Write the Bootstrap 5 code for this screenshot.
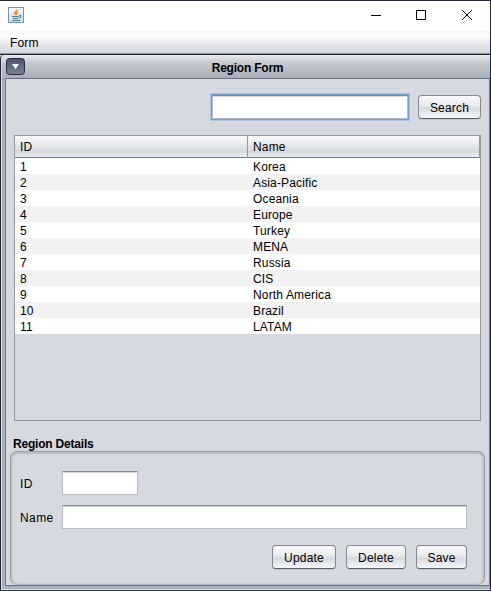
<!DOCTYPE html>
<html lang="en">
<head>
<meta charset="utf-8">
<title>Region Form</title>
<link href="https://cdn.jsdelivr.net/npm/bootstrap@5.3.0/dist/css/bootstrap.min.css" rel="stylesheet">
<style>
body{width:491px;height:591px;overflow:hidden;background:#1c2b3c;font:12px/16px "Liberation Sans",Arial,sans-serif;letter-spacing:.15px;color:#000}
.app-window{width:490px;height:591px;border-top:1px solid #25293a;background:#d6d9df}
.title-bar{height:30px;padding-left:8px;background:#fff}
.win-btn{width:46px;height:29px}
.menu-strip{height:24px;padding:4px 0 0 10px;background:linear-gradient(#f6f6f7 0,#fff 5px,#ebecef 11px,#d6d9e0 21px);border-bottom:1px solid #232834;box-shadow:inset 0 -1px #8d919d}
.inner-frame{height:536px;border-left:1px solid #252a36;border-bottom:1px solid #333a47;padding:0 0 4px 4px;background:linear-gradient(#eaebee 0,#c5c8cf 8px,#a9aeb8 23px,#a9b0be 24px);box-shadow:inset 1px -1px #d9dce2;border-top-left-radius:4px}
.frame-title{height:23px;margin-left:-4px;font-weight:700;letter-spacing:-.22px}
.frame-title .caption{padding:5px 0 0;width:495px;margin-left:-25px}
.menu-btn{width:19px;height:17px;margin:3px 0 0 5px}
.content-pane{height:508px;border:1px solid #6b7282;border-right-color:#737b8a;background:#d6d9df;padding:15px 4px 0}
.search-row{height:26px;padding-right:4px}
.field{border:1px solid #b8babf;border-top-color:#85878b;background:#fff;box-shadow:inset 0 1px #d8d9db;border-radius:0;outline:0;padding:0 5px;height:24px;min-width:0;font-size:12px}
.search-field{width:196px;margin:1px 10px 0 0;box-shadow:0 0 0 1px #73a4d1,0 0 0 2px #a9c4de,inset 0 1px #d8d9db}
.push{height:24px;margin-top:1px;padding:1px 0 0;font-size:12px;line-height:22px;letter-spacing:.2px;color:#000;border:1px solid #858890;border-bottom-color:#565a63;border-radius:4px;background:linear-gradient(#fafafb,#e8eaed 45%,#d6d9df 55%,#f5f7fa);box-shadow:0 1px #c4c7ce}
.grid-view{height:286px;margin:15px 4px 0;border:1px solid #9297a1}
.grid-view .cells{display:grid;grid-template-columns:233px 1fr}
.head-cells{height:22px;background:linear-gradient(#fbfbfb,#e2e4e7 50%,#d6d9df 72%,#e9edf6);border-bottom:1px solid #747986}
.head-cells span{padding:3px 5px;border-right:1px solid #9498a1}
.line-cells{height:16px;background:#fff}
.line-cells:nth-child(odd){background:#f2f2f2}
.line-cells span{padding-left:5px;line-height:18px}
.group-title{height:15px;margin:15px 0 0 3px;font-weight:700;letter-spacing:-.2px}
.group-box{height:134px;border:1px solid #999ca3;border-bottom-color:#b4b7bd;border-radius:7px;box-shadow:inset 0 2px 2px #b9bcc2,inset 1px 0 2px #bbbec5,inset -1px 0 2px #bbbec5;padding:19px 17px 0 9px}
.group-box label{width:42px;height:25px;line-height:26px;letter-spacing:.4px}
.group-box .detail-row{height:25px}
.id-field{width:76px}
.name-row{margin-top:9px}
.action-row{gap:10px;margin-top:14px}
.w-search{width:63px}.w-update{width:64px}.w-delete{width:60px}.w-save{width:51px}
</style>
<script src="https://cdn.jsdelivr.net/npm/bootstrap@5.3.0/dist/js/bootstrap.bundle.min.js"></script>
</head>
<body>
<div class="app-window">
<header class="title-bar d-flex justify-content-between">
<svg class="mt-1" width="16" height="22" viewBox="0 0 16 22"><defs><linearGradient id="tile" x2="0" y2="1"><stop stop-color="#f7f9fa"/><stop offset="1" stop-color="#d4dce2"/></linearGradient></defs><rect x=".5" y="2.500" width="15" height="15" fill="url(#tile)" stroke="#7893a8"/><path d="M9.500 4.500C9 6.500 6 7 6.500 8.500L8 10M10.500 7C8 8 8 8.500 9 10" fill="none" stroke="#ee8022" stroke-width="1.300"/><path d="M4 11.500h7M5 13.500h5M4 15.500h8M11 10.500c3-1 2.500 2 0 2.500" fill="none" stroke="#467a9b" stroke-width="1.100"/></svg>
<div class="d-flex">
<svg class="win-btn" viewBox="0 0 46 29"><path d="M19 14.500h10" stroke="#000"/></svg>
<svg class="win-btn" viewBox="0 0 46 29"><path d="M18.500 9.500h9v9h-9z" fill="none" stroke="#000"/></svg>
<svg class="win-btn" viewBox="0 0 46 29"><path d="M18 9l10 10M28 9L18 19" stroke="#000"/></svg>
</div>
</header>
<nav class="menu-strip">Form</nav>
<main class="inner-frame">
<div class="frame-title d-flex">
<svg class="menu-btn flex-shrink-0" viewBox="0 0 19 17"><defs><linearGradient id="mb" x2="0" y2="1"><stop stop-color="#4c5568"/><stop offset="1" stop-color="#7a8396"/></linearGradient></defs><rect x=".5" y=".5" width="18" height="16" rx="3" fill="url(#mb)" stroke="#262d3b"/><path d="M6 6h7l-3.500 5z" fill="#fff"/></svg>
<div class="caption text-center flex-shrink-0">Region Form</div>
</div>
<section class="content-pane">
<div class="search-row d-flex justify-content-end"><input class="field search-field" aria-label="Search"><button class="push w-search">Search</button></div>
<div class="grid-view">
<div class="cells head-cells"><span>ID</span><span>Name</span></div>
<div class="cells line-cells"><span>1</span><span>Korea</span></div>
<div class="cells line-cells"><span>2</span><span>Asia-Pacific</span></div>
<div class="cells line-cells"><span>3</span><span>Oceania</span></div>
<div class="cells line-cells"><span>4</span><span>Europe</span></div>
<div class="cells line-cells"><span>5</span><span>Turkey</span></div>
<div class="cells line-cells"><span>6</span><span>MENA</span></div>
<div class="cells line-cells"><span>7</span><span>Russia</span></div>
<div class="cells line-cells"><span>8</span><span>CIS</span></div>
<div class="cells line-cells"><span>9</span><span>North America</span></div>
<div class="cells line-cells"><span>10</span><span>Brazil</span></div>
<div class="cells line-cells"><span>11</span><span>LATAM</span></div>
</div>
<div class="group-title">Region Details</div>
<div class="group-box">
<div class="detail-row d-flex"><label for="rid">ID</label><input id="rid" class="field id-field"></div>
<div class="detail-row name-row d-flex"><label for="rname">Name</label><input id="rname" class="field flex-grow-1"></div>
<div class="action-row d-flex justify-content-end"><button class="push w-update">Update</button><button class="push w-delete">Delete</button><button class="push w-save">Save</button></div>
</div>
</section>
</main>
</div>
</body>
</html>
